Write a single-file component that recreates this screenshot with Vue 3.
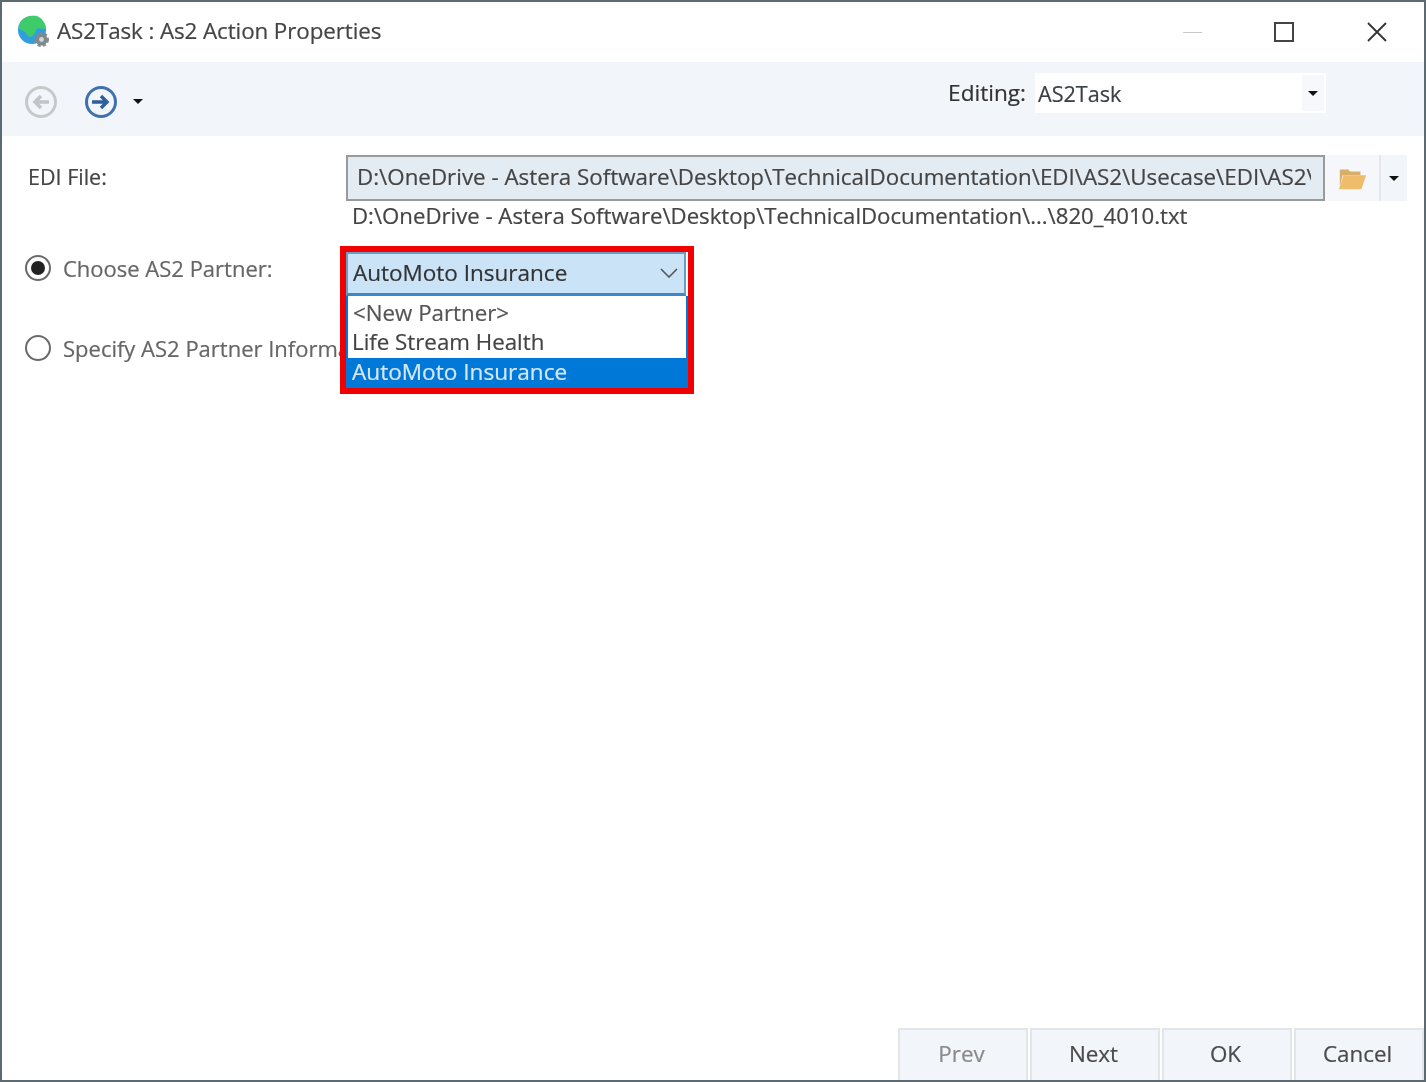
<script setup>
const options = [
  { label: '<New Partner>', cls: 'opt-new' },
  { label: 'Life Stream Health', cls: 'opt-life' },
  { label: 'AutoMoto Insurance', cls: 'opt-sel' }
]
const footer = [
  { label: 'Prev', muted: true },
  { label: 'Next', muted: false },
  { label: 'OK', muted: false },
  { label: 'Cancel', muted: false }
]
</script>

<template>
  <div class="window">
    <header class="titlebar">
      <svg class="app-icon" width="34" height="34" viewBox="0 0 34 34">
        <circle cx="15" cy="15" r="14" fill="#2f9fe0" />
        <path d="M4 6 C8 1 15 0 20 1 C25 3 28 8 29 13 C25 16 22 11 19 15 C18 21 13 24 10 20 C9 15 3 16 1.5 13 C2 11 3 8 4 6Z" fill="#3ecb6a" />
        <circle cx="24.5" cy="24.5" r="6" fill="#7f8a8f" stroke="#7f8a8f" stroke-width="3" stroke-dasharray="3 2" />
        <circle cx="24.5" cy="24.5" r="5.5" fill="#7f8a8f" />
        <circle cx="24.5" cy="24.5" r="2.4" fill="#cfd5d8" />
      </svg>
      <span class="title">AS2Task : As2 Action Properties</span>
      <div class="win-controls">
        <span class="min"></span>
        <span class="max"></span>
        <svg class="close" width="20" height="20" viewBox="0 0 20 20">
          <path d="M1 1 L19 19 M19 1 L1 19" stroke="#333" stroke-width="1.8" fill="none" />
        </svg>
      </div>
    </header>

    <div class="toolbar">
      <svg class="nav-back" width="34" height="34" viewBox="0 0 34 34">
        <circle cx="17" cy="17" r="14.5" fill="none" stroke="#c6c8ca" stroke-width="3" />
        <path d="M25 17 H12 M17 11 L11 17 L17 23" fill="none" stroke="#c2c4c6" stroke-width="3.4" />
      </svg>
      <svg class="nav-next" width="34" height="34" viewBox="0 0 34 34">
        <circle cx="17" cy="17" r="14.5" fill="none" stroke="#3f72ad" stroke-width="3" />
        <path d="M8 17 H23 M17 11 L23 17 L17 23" fill="none" stroke="#2f5f9c" stroke-width="3.4" />
      </svg>
      <span class="caret nav-caret"></span>
      <div class="editing">
        <span class="editing-label">Editing:</span>
        <div class="editing-box">
          <span class="editing-value">AS2Task</span>
          <span class="editing-drop"><span class="caret"></span></span>
        </div>
      </div>
    </div>

    <main class="content">
      <div class="file-row">
        <label class="file-label">EDI File:</label>
        <div class="file-input">
          <div class="file-clip">D:\OneDrive - Astera Software\Desktop\TechnicalDocumentation\EDI\AS2\Usecase\EDI\AS2\820_4010.txt</div>
        </div>
        <span class="folder-btn">
          <svg width="30" height="25" viewBox="0 0 32 25">
            <path d="M3 6 L3 3 L12 3 L14 5 L25 5 L25 9 L6 9 L3 21 Z" fill="#d9ae68" />
            <path d="M7 9 L31 9 L26 24 L2 24 Z" fill="#eebc6a" />
          </svg>
        </span>
        <span class="file-drop"><span class="caret"></span></span>
      </div>
      <div class="file-hint">D:\OneDrive - Astera Software\Desktop\TechnicalDocumentation\...\820_4010.txt</div>

      <div class="radio-row choose">
        <span class="radio checked"><span class="dot"></span></span>
        <span class="radio-label">Choose AS2 Partner:</span>
      </div>
      <div class="radio-row specify">
        <span class="radio"></span>
        <span class="radio-label">Specify AS2 Partner Information:</span>
      </div>

      <div class="highlight">
        <div class="combo">
          <span>AutoMoto Insurance</span>
          <svg width="18" height="10" viewBox="0 0 18 10">
            <path d="M1 1 L9 9 L17 1" fill="none" stroke="#555" stroke-width="1.6" />
          </svg>
        </div>
        <ul class="list">
          <li v-for="o in options" :key="o.label" :class="o.cls">{{ o.label }}</li>
        </ul>
      </div>
    </main>

    <footer class="footer">
      <button v-for="b in footer" :key="b.label" class="foot-btn" :class="{ muted: b.muted }">{{ b.label }}</button>
    </footer>
  </div>
</template>

<style scoped>
.window {
  width: 1426px;
  height: 1082px;
  box-sizing: border-box;
  border: 2px solid #5d6a72;
  background: #fff;
  display: flex;
  flex-direction: column;
  font-family: "Open Sans", "Noto Sans", sans-serif;
  font-size: 22px;
  color: #3c3c3c;
  overflow: hidden;
  filter: blur(0.55px);
  -webkit-text-stroke: 0.2px currentColor;
}
.titlebar {
  height: 60px;
  flex: none;
  display: flex;
  align-items: center;
  padding-left: 15px;
}
.app-icon { flex: none; margin-right: 6px; margin-top: -1px; }
.title { font-size: 22.4px; color: #444; letter-spacing: -0.1px; margin-top: -4px; }
.win-controls { margin-left: auto; display: flex; align-items: center; margin-right: 37px; }
.min { width: 19px; height: 1px; background: #c8c8c8; margin-right: 72px; }
.max { width: 20px; height: 20px; box-sizing: border-box; border: 2px solid #444; margin-right: 73px; }
.close { width: 20px; height: 20px; }

.toolbar {
  height: 74px;
  flex: none;
  background: #f2f5f9;
  display: flex;
  align-items: center;
  padding-left: 22px;
}
.nav-back { margin-right: 26px; margin-top: 5px; }
.nav-next { margin-top: 5px; }
.nav-caret { margin-left: 15px; margin-top: 5px; }
.caret {
  display: inline-block;
  width: 0;
  height: 0;
  border-left: 5px solid transparent;
  border-right: 5px solid transparent;
  border-top: 5px solid #111;
}
.editing { margin-left: auto; margin-right: 98px; display: flex; align-items: center; margin-top: -12px; }
.editing-label { font-size: 22.6px; margin-right: 9px; color: #333; margin-top: -1px; }
.editing-box {
  width: 291px;
  height: 40px;
  background: #fff;
  display: flex;
  align-items: center;
  justify-content: space-between;
  padding: 0 2px 0 3px;
  box-sizing: border-box;
}
.editing-value { font-size: 21.6px; color: #3a4048; }
.editing-drop {
  width: 22px;
  height: 36px;
  background: #f6f8fb;
  display: flex;
  align-items: center;
  justify-content: center;
}

.content { flex: 1; position: relative; min-height: 0; }
.file-row {
  display: flex;
  align-items: stretch;
  height: 46px;
  margin-top: 19px;
  padding-left: 26px;
}
.file-label { width: 318px; flex: none; font-size: 21.5px; line-height: 44px; color: #444; }
.file-input {
  width: 979px;
  flex: none;
  box-sizing: border-box;
  border: 2px solid #9a9a9a;
  background: #e4ecf3;
  padding: 0 12px 0 9px;
}
.file-clip {
  line-height: 40px;
  font-size: 22.35px;
  white-space: nowrap;
  overflow: hidden;
  color: #444;
}
.folder-btn {
  width: 54px;
  flex: none;
  background: #f5f7fa;
  display: flex;
  align-items: center;
  justify-content: center;
}
.file-drop {
  width: 26px;
  flex: none;
  background: #f2f5f9;
  border-left: 2px solid #e4e8ec;
  display: flex;
  align-items: center;
  justify-content: center;
}
.file-hint {
  margin: 0 0 0 350px;
  font-size: 22.2px;
  line-height: 30px;
  color: #444;
  white-space: nowrap;
}
.radio-row { display: flex; align-items: center; padding-left: 23px; height: 40px; white-space: nowrap; }
.choose { margin-top: 17px; }
.specify { margin-top: 40px; }
.radio-label { font-size: 22px; color: #666; margin-left: 12px; }
.radio {
  width: 26px;
  height: 26px;
  box-sizing: border-box;
  border: 2px solid #6a6a6a;
  border-radius: 50%;
  background: #fff;
  display: flex;
  align-items: center;
  justify-content: center;
  flex: none;
}
.dot { width: 14px; height: 14px; border-radius: 50%; background: #222; }

.highlight {
  position: absolute;
  left: 338px;
  top: 110px;
  width: 354px;
  height: 148px;
  box-sizing: border-box;
  border: 6px solid #f00000;
  background: #fff;
  display: flex;
  flex-direction: column;
}
.combo {
  height: 44px;
  flex: none;
  box-sizing: border-box;
  background: #cbe3f6;
  border: 2px solid #6c9cc4;
  border-bottom: 3px solid #3c87c6;
  margin-right: 2px;
  display: flex;
  align-items: center;
  justify-content: space-between;
  padding: 0 6px 2px 5px;
  font-size: 22.5px;
  color: #333;
}
.list {
  list-style: none;
  margin: 0;
  padding: 0;
  flex: 1;
  border-left: 2px solid #0078d7;
  border-right: 2px solid #0078d7;
}
.list li { font-size: 22.3px; line-height: 28px; height: 30px; padding-left: 4px; color: #444; white-space: nowrap; }
.list .opt-new { padding-left: 5px; color: #555; line-height: 30px; margin-top: 2px; }
.list .opt-sel { background: #0078d7; color: #d6e8f7; font-size: 22.6px; }

.footer { height: 52px; flex: none; display: flex; justify-content: flex-end; gap: 2px; }
.foot-btn {
  width: 130px;
  height: 100%;
  box-sizing: border-box;
  background: #f2f5f9;
  border: 2px solid #e3e6e9;
  border-bottom: 0;
  font-family: inherit;
  font-size: 22.4px;
  color: #4a4a4a;
  padding: 0 3px 3px 0;
  -webkit-text-stroke: 0.2px currentColor;
}
.foot-btn.muted { color: #8a8a8a; }
</style>
